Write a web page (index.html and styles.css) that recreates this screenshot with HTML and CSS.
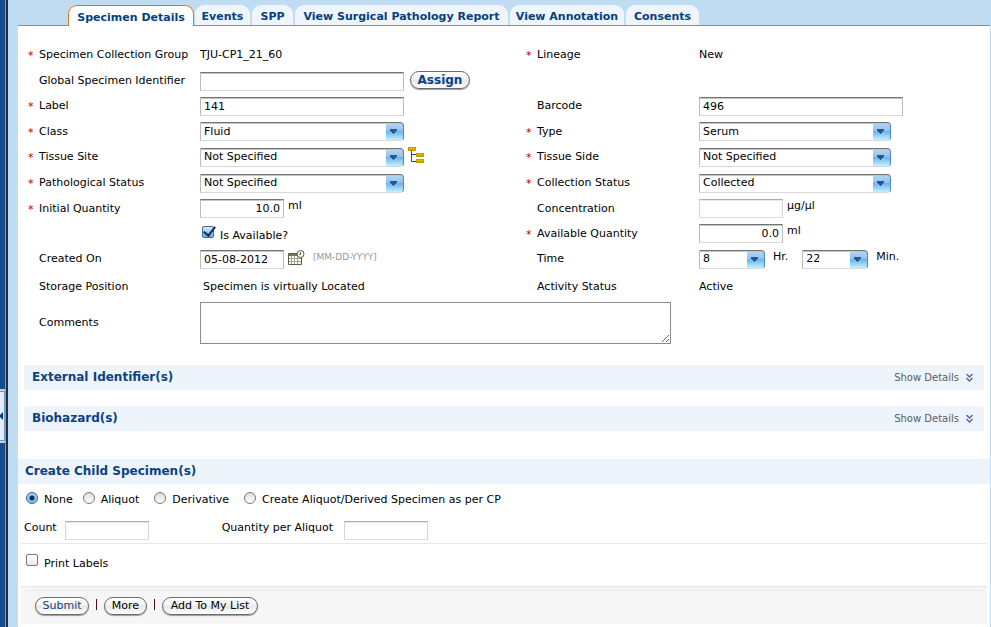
FILE: index.html
```html
<!DOCTYPE html>
<html lang="en">
<head>
<meta charset="utf-8">
<title>Specimen Details</title>
<link rel="stylesheet" href="styles.css">
</head>
<body>
<div class="app">
  <aside class="rail"><button class="rail-toggle" type="button" aria-label="Collapse"><svg width="3" height="8" viewBox="0 0 3 8"><path d="M3 0v8L0 5V3z" fill="#053a78"/></svg></button></aside>
  <main class="page">
    <nav class="tabs">
      <a class="tab tab-active" href="#">Specimen Details</a>
      <a class="tab tab-events" href="#">Events</a>
      <a class="tab tab-spp" href="#">SPP</a>
      <a class="tab tab-report" href="#">View Surgical Pathology Report</a>
      <a class="tab tab-annotation" href="#">View Annotation</a>
      <a class="tab tab-consents" href="#">Consents</a>
    </nav>
    <form class="panel">
      <div class="fields">
        <div class="name req">Specimen Collection Group</div>
        <div class="value">TJU-CP1_21_60</div>
        <div class="name req">Lineage</div>
        <div class="value">New</div>

        <label class="name" for="gsi">Global Specimen Identifier</label>
        <div class="value wide assign-row"><input class="box long" id="gsi" type="text"><button class="pill assign" type="button">Assign</button></div>

        <label class="name req" for="label">Label</label>
        <div class="value"><input class="box long" id="label" type="text" value="141"></div>
        <label class="name" for="barcode">Barcode</label>
        <div class="value"><input class="box long" id="barcode" type="text" value="496"></div>

        <label class="name req" for="class">Class</label>
        <div class="value"><select class="box pick" id="class"><option>Fluid</option></select></div>
        <label class="name req" for="type">Type</label>
        <div class="value"><select class="box pick pick-right" id="type"><option>Serum</option></select></div>

        <label class="name req" for="site">Tissue Site</label>
        <div class="value"><select class="box pick" id="site"><option>Not Specified</option></select>
          <svg class="tree" width="17" height="17" viewBox="0 0 17 17"><path d="M3.500 3v11.500H8M3.500 7.500H8" fill="none" stroke="#1d4b93"/><path fill="#c79c00" d="M0 0h8v4H0zM8 6h8v4H8zM8 12h8v4H8z"/><path fill="#e8bd00" d="M1 1h6v1H1zM9 7h6v1H9zM9 13h6v1H9z"/></svg></div>
        <label class="name req" for="side">Tissue Side</label>
        <div class="value"><select class="box pick pick-right" id="side"><option>Not Specified</option></select></div>

        <label class="name req" for="path">Pathological Status</label>
        <div class="value"><select class="box pick" id="path"><option>Not Specified</option></select></div>
        <label class="name req" for="coll">Collection Status</label>
        <div class="value"><select class="box pick pick-right" id="coll"><option>Collected</option></select></div>

        <label class="name req" for="qty">Initial Quantity</label>
        <div class="value"><input class="box short num" id="qty" type="text" value="10.0"><span class="unit">ml</span></div>
        <label class="name" for="conc">Concentration</label>
        <div class="value"><input class="box short pale" id="conc" type="text"><span class="unit">µg/µl</span></div>

        <div class="name"></div>
        <div class="value check-row"><input class="tick" id="avail" type="checkbox" checked><label class="check-text" for="avail">Is Available?</label></div>
        <label class="name req" for="aqty">Available Quantity</label>
        <div class="value"><input class="box short num" id="aqty" type="text" value="0.0"><span class="unit">ml</span></div>

        <label class="name" for="created">Created On</label>
        <div class="value"><input class="box short" id="created" type="text" value="05-08-2012">
          <svg class="calendar" width="17" height="16" viewBox="0 0 17 16"><path d="M.5 3.500h13v11H.5z" fill="#fff" stroke="#5c5b46"/><path d="M1 4h12v2H1z" fill="#77765f"/><path d="M1 8.500h12M1 11.500h12M3.500 6v8M6.500 6v8M9.500 6v8" stroke="#a5a494"/><circle cx="12.500" cy="4" r="3.500" fill="#fffef0" stroke="#5c5b46"/><path d="M12.500 2v2.500H11" fill="none" stroke="#5c5b46"/></svg>
          <span class="hint">[MM-DD-YYYY]</span></div>
        <label class="name" for="hour">Time</label>
        <div class="value"><select class="box pick pick-time" id="hour"><option>8</option></select><span class="unit unit-time">Hr.</span><select class="box pick pick-time minute" aria-label="Minutes"><option>22</option></select><span class="unit unit-time">Min.</span></div>

        <div class="name">Storage Position</div>
        <div class="value located">Specimen is virtually Located</div>
        <div class="name">Activity Status</div>
        <div class="value">Active</div>

        <label class="name" for="comments">Comments</label>
        <div class="value wide"><textarea class="comments" id="comments"></textarea></div>
      </div>

      <section class="bar"><h2>External Identifier(s)</h2><a class="details" href="#">Show Details <svg width="7" height="8" viewBox="0 0 7 8"><path d="M.5 0L3.500 3l3-3M.5 4L3.500 7l3-3" fill="none" stroke="#626299" stroke-width="1.500"/></svg></a></section>
      <section class="bar"><h2>Biohazard(s)</h2><a class="details" href="#">Show Details <svg width="7" height="8" viewBox="0 0 7 8"><path d="M.5 0L3.500 3l3-3M.5 4L3.500 7l3-3" fill="none" stroke="#626299" stroke-width="1.500"/></svg></a></section>

      <h2 class="child-title">Create Child Specimen(s)</h2>
      <div class="radios">
        <label><input class="dot" type="radio" name="child" checked><span>None</span></label>
        <label><input class="dot" type="radio" name="child"><span>Aliquot</span></label>
        <label class="later"><input class="dot" type="radio" name="child"><span>Derivative</span></label>
        <label class="later"><input class="dot" type="radio" name="child"><span>Create Aliquot/Derived Specimen as per CP</span></label>
      </div>
      <div class="counts">
        <label for="count">Count</label><input class="box short pale" id="count" type="text">
        <label class="per" for="per">Quantity per Aliquot</label><input class="box short pale" id="per" type="text">
      </div>
      <div class="print"><input class="tick" id="print" type="checkbox"><label class="check-text" for="print">Print Labels</label></div>
      <div class="actions">
        <div class="buttons">
          <button class="pill submit" type="button">Submit</button><i class="sep"></i>
          <button class="pill more" type="button">More</button><i class="sep"></i>
          <button class="pill add" type="button">Add To My List</button>
        </div>
      </div>
    </form>
  </main>
</div>
</body>
</html>
```

FILE: styles.css
```css
* { box-sizing: border-box; }
body {
  margin: 0;
  background: #fff;
  color: #000;
  font: 11px/16px Verdana, "DejaVu Sans", sans-serif;
}
input, select, textarea, button { font: inherit; color: inherit; margin: 0; }
h2 { margin: 0; font-size: 12px; line-height: 25px; color: #0c4284; }
a { color: inherit; text-decoration: none; }
svg { flex: none; }

.app { display: flex; min-height: 100vh; background: #c0dcf2; }
.rail {
  flex: none;
  width: 8px;
  background: #134c8a;
  border-right: 2px solid #252e38;
  box-shadow: inset -1px 0 #7f9db9;
}
.rail-toggle {
  display: flex;
  align-items: center;
  width: 5px;
  height: 54px;
  margin-top: 389px;
  padding: 0;
  background: #e2effb;
  border: solid #d5d2c9;
  border-width: 2px 0;
  box-shadow: inset -1px 0 #6992ca, inset 0 1px #6992ca, inset 0 -1px #6992ca;
}
.page { flex: 1; min-width: 0; padding: 5px 1px 0 10px; display: flex; flex-direction: column; }

.tabs { display: flex; align-items: stretch; gap: 2px; height: 21px; padding-left: 50px; border-bottom: 1px solid #e07522; }
.tab {
  height: 20px;
  border-radius: 9px 9px 0 0;
  background: #eef5fc;
  color: #053f7d;
  font-weight: bold;
  line-height: 23px;
  text-align: center;
  white-space: nowrap;
}
.tab-active { flex: 0 0 126px; height: 21px; margin-right: -1px; background: #fff; border: 1px solid #e07522; border-bottom: 0; }
.tab-events { flex: 0 0 55px; }
.tab-spp { flex: 0 0 41px; }
.tab-report { flex: 0 0 213px; }
.tab-annotation { flex: 0 0 114px; }
.tab-consents { flex: 0 0 73px; }

.panel { flex: 1; background: #fff; padding-top: 16px; }
.fields {
  display: grid;
  grid-template-columns: 171px 327px 172px 1fr;
  grid-template-rows: 26px 25px 26px 25px 26px 26px 25px 25px 26px 29px 44px;
  padding-left: 11px;
  align-items: center;
}
.name { padding-left: 10px; position: relative; white-space: nowrap; }
.req::before { content: "*"; position: absolute; left: -1px; top: 1px; color: #b00000; }
.value { display: flex; align-items: center; white-space: nowrap; }
.wide { grid-column: 2 / -1; }
.assign-row { padding-top: 2px; }
.located { padding-left: 3px; }

.box {
  height: 19px;
  padding: 0 3px;
  background: #fff;
  border: 1px solid #bcbcbc;
  border-top-color: #747474;
  border-bottom-color: #d8d8d8;
  border-radius: 0;
  box-shadow: inset 0 1px #c4c4c4;
}
.long { width: 204px; }
.short { width: 84px; }
.num { text-align: right; }
.pale { border-color: #adadad #d4d4d4 #dedede; box-shadow: inset 0 1px #e8e8e8; }
.pick {
  appearance: none;
  width: 204px;
  padding: 0 20px 0 3px;
  border-right: 1px solid #4f88c0;
  border-radius: 0 4px 4px 0;
  background:
    linear-gradient(#24588f, #24588f) right 6px top 6px / 7px 2px no-repeat,
    linear-gradient(#24588f, #24588f) right 7px top 8px / 5px 1px no-repeat,
    linear-gradient(#24588f, #24588f) right 8px top 9px / 3px 1px no-repeat,
    linear-gradient(#24588f, #24588f) right 9px top 10px / 1px 1px no-repeat,
    linear-gradient(#b5d6f4, #93c2ee 45%, #6fb1ec 50%, #c2f2ff) right / 17px 100% no-repeat,
    #fff;
}
.pick-right { width: 192px; }
.pick-time { width: 66px; }
.minute { margin-left: 14px; }
.unit { margin: 0 0 5px 4px; }
.unit-time { margin-left: 8px; }
.tree { margin: 0 0 4px 4px; }
.calendar { margin: 0 0 2px 4px; }
.hint { margin: 0 0 4px 8px; color: #999; font-size: 9px; }
.comments {
  display: block;
  width: 471px;
  height: 42px;
  border: 1px solid #8c8c8c;
  border-radius: 0;
  resize: both;
}

.pill {
  height: 18px;
  padding: 0;
  border: 1px solid #6b6b6b;
  border-radius: 9px;
  background: linear-gradient(#fff, #f3f3f3 45%, #e6e6e6 50%, #fff);
  box-shadow: 0 1px 1px #999;
  line-height: 16px;
  white-space: nowrap;
}
.assign { width: 60px; margin: 0 0 4px 6px; font-size: 12px; font-weight: bold; color: #0c4284; }
.submit { width: 54px; color: #0c4284; }
.more { width: 43px; }
.add { width: 96px; }

.tick {
  appearance: none;
  flex: none;
  width: 12px;
  height: 12px;
  margin-bottom: 4px;
  border: 1px solid #777;
  border-radius: 2px;
  background: linear-gradient(#fff, #e9e9e9);
  position: relative;
}
.tick:checked { border-color: #3f6da2; background: linear-gradient(#d5e9fb, #62aef0); }
.tick:checked::after {
  content: "";
  position: absolute;
  left: 3px;
  top: -3px;
  width: 5px;
  height: 10px;
  border: solid #1b2c40;
  border-width: 0 2px 2px 0;
  transform: rotate(38deg);
}
.check-row { padding-left: 2px; }
.check-text { margin: 4px 0 0 6px; }

.bar {
  display: flex;
  justify-content: space-between;
  align-items: center;
  height: 25px;
  margin: 0 6px 16px;
  padding: 0 11px 0 8px;
  background: #edf4fc;
}
.fields + .bar { margin-top: 20px; }
.details { display: flex; align-items: center; gap: 7px; color: #5c5c5c; font-size: 10px; }
.child-title { margin-top: 28px; padding-left: 7px; background: #edf4fc; }

.radios { display: flex; align-items: center; gap: 10px; height: 31px; padding-left: 8px; }
.radios label { display: flex; align-items: flex-start; }
.radios span { margin: 1px 0 0 6px; }
.radios .later { margin-left: 5px; }
.dot {
  appearance: none;
  flex: none;
  width: 12px;
  height: 12px;
  margin-top: 1px;
  border: 1px solid #777;
  border-radius: 50%;
  background: linear-gradient(#ddd, #fff);
}
.dot:checked { border-color: #34649b; background: radial-gradient(#102b4c 2px, transparent 3px), linear-gradient(#a7cdf3, #7cc3fb); }
.counts { display: flex; align-items: flex-start; height: 29px; margin: 0 3px; padding: 5px 0 0 3px; border-bottom: 1px solid #e8e8e8; }
.counts .box { margin: 1px 0 0 8px; }
.counts .per { min-width: 114px; margin-left: 73px; }
.print { display: flex; align-items: center; height: 42px; padding: 0 0 6px 8px; }
.actions { margin: 0 3px; padding: 3px 3px 0 6px; height: 38px; background: #f6f6f6; border-top: 1px solid #e8e8e8; }
.buttons { display: flex; padding: 6px 0 0 8px; border-top: 1px solid #eaeaea; }
.sep { width: 1px; height: 11px; margin: 2px 7px 0; background: #4a1010; }
```
